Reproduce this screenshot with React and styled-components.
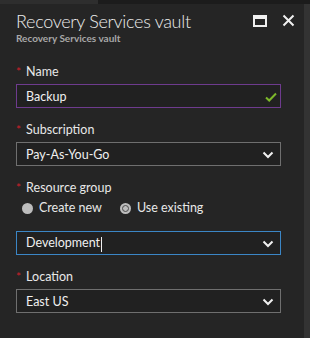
import React from 'react'
import styled, { createGlobalStyle } from 'styled-components'

const Global = createGlobalStyle`
  html, body { margin: 0; padding: 0; background: #252525; }
  body { font-family: "Segoe UI", Lato, "Noto Sans", sans-serif; }
`

const Frame = styled.div`
  width: 310px;
  height: 338px;
  display: flex;
  flex-direction: column;
  background: #252525;
  overflow: hidden;
`

const TopStrip = styled.div`
  height: 4px;
  display: flex;
  flex-shrink: 0;
  div:first-child { width: 98px; background: #2e2e2e; }
  div:last-child { flex: 1; background: #1c1c1c; }
`

const Body = styled.div`
  flex: 1;
  display: flex;
`

const Blade = styled.div`
  flex: 1;
  display: flex;
  flex-direction: column;
  padding: 0 23px 0 16px;
`

const Scroll = styled.div`
  width: 7px;
  background: #333333;
`

const Header = styled.div`
  display: flex;
  justify-content: space-between;
  align-items: flex-start;
  padding-top: 6px;
  margin-bottom: 20px;
`

const Title = styled.h1`
  margin: 0;
  font-size: 18px;
  font-weight: 300;
  letter-spacing: -0.3px;
  line-height: 22px;
  color: #ececec;
  white-space: nowrap;
`

const Sub = styled.div`
  font-size: 10px;
  font-weight: 700;
  color: #a8a8a8;
  line-height: 12px;
`

const Icons = styled.div`
  display: flex;
  gap: 15px;
  align-items: center;
  padding-top: 4px;
  margin-right: -14px;
`

const Field = styled.div`
  display: flex;
  flex-direction: column;
  margin-bottom: 14px;
`

const Label = styled.label`
  font-size: 12.5px;
  color: #e8e8e8;
  line-height: 16px;
  margin-bottom: 4px;
  span { color: #d0202a; margin-right: 5px; font-size: 12px; }
`

const Input = styled.div`
  box-sizing: border-box;
  height: 24px;
  width: 265px;
  border: 1px solid ${p => p.$border};
  background: #212121;
  display: flex;
  align-items: center;
  justify-content: space-between;
  padding: 1px 6px 0 9px;
  font-size: 12.5px;
  color: #f0f0f0;
`

const Caret = styled.span`
  width: 1px;
  height: 15px;
  margin-left: 1px;
  background: #f0f0f0;
  display: inline-block;
  vertical-align: middle;
`

const Radios = styled.div`
  display: flex;
  gap: 18px;
  padding-left: 6px;
  margin-top: 1px;
  margin-bottom: 16px;
`

const Radio = styled.div`
  display: flex;
  align-items: center;
  gap: 6px;
  font-size: 12.5px;
  color: #e8e8e8;
  line-height: 14px;
`

const Dot = styled.span`
  width: 11px;
  height: 11px;
  border-radius: 50%;
  background: #bdbdbd;
  position: relative;
  ${p => p.$on && `
    &::after {
      content: '';
      position: absolute;
      left: 2px; top: 2px;
      width: 7px; height: 7px;
      box-sizing: border-box;
      border-radius: 50%;
      border: 1.5px solid #4a4a4a;
      background: #bdbdbd;
    }
  `}
`

const CheckIcon = styled.svg`
  margin-right: -3px;
`

const Chevron = () => (
  <svg width="12" height="8" viewBox="0 0 12 8">
    <path d="M1.5 1.5 L6 6 L10.5 1.5" stroke="#f0f0f0" strokeWidth="2" fill="none" />
  </svg>
)

const Check = () => (
  <CheckIcon width="12" height="10" viewBox="0 0 12 10">
    <path d="M1 5.5 L4.2 8.5 L11 1.5" stroke="#7db82a" strokeWidth="2" fill="none" />
  </CheckIcon>
)

const App = () => (
  <Frame>
    <Global />
    <TopStrip><div /><div /></TopStrip>
    <Body>
      <Blade>
        <Header>
          <div>
            <Title>Recovery Services vault</Title>
            <Sub>Recovery Services vault</Sub>
          </div>
          <Icons>
            <svg width="14" height="12" viewBox="0 0 14 12">
              <rect x="1" y="1" width="12" height="10" stroke="#f0f0f0" strokeWidth="2" fill="none" />
              <rect x="1" y="1" width="12" height="3" fill="#f0f0f0" />
            </svg>
            <svg width="13" height="13" viewBox="0 0 13 13">
              <path d="M1.5 1.5 L11.5 11.5 M11.5 1.5 L1.5 11.5" stroke="#f0f0f0" strokeWidth="2" />
            </svg>
          </Icons>
        </Header>
        <Field>
          <Label><span>*</span>Name</Label>
          <Input $border="#6e3b8e">Backup<Check /></Input>
        </Field>
        <Field>
          <Label><span>*</span>Subscription</Label>
          <Input $border="#6f6f6f">Pay-As-You-Go<Chevron /></Input>
        </Field>
        <Field>
          <Label><span>*</span>Resource group</Label>
          <Radios>
            <Radio><Dot />Create new</Radio>
            <Radio><Dot $on />Use existing</Radio>
          </Radios>
          <Input $border="#3b86c6"><span>Development<Caret /></span><Chevron /></Input>
        </Field>
        <Field>
          <Label><span>*</span>Location</Label>
          <Input $border="#6f6f6f">East US<Chevron /></Input>
        </Field>
      </Blade>
      <Scroll />
    </Body>
  </Frame>
)

export default App
